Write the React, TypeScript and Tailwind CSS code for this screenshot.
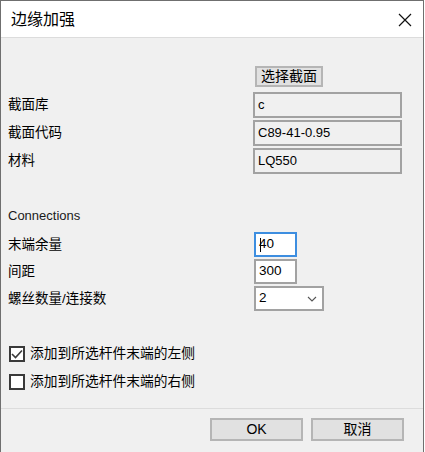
import React from "react";

const FONT = "font-['Liberation_Sans','Noto_Sans_CJK_SC',sans-serif]";

const Label = ({ children }: { children: React.ReactNode }) => (
  <div className="w-[245px] shrink-0 text-[13.5px] leading-none text-black">{children}</div>
);

const ReadField = ({ value }: { value: string }) => (
  <div className="flex h-[26px] w-[149px] items-center border-2 border-[#a2a2a2] bg-[#f0f0f0] pl-[3px] text-[13px] text-black">
    {value}
  </div>
);

const EditField = ({ value, focused }: { value: string; focused?: boolean }) => (
  <div
    className={
      focused
        ? "relative flex h-[25px] w-[43px] items-center border-2 border-[#3d8ee0] bg-white pl-[3px] text-[13.5px] text-black"
        : "relative flex h-[25px] w-[43px] items-center border-2 border-[#a2a2a2] bg-white pl-[3px] text-[13.5px] text-black"
    }
  >
    {focused && <span className="absolute left-[4px] top-[4px] h-[14px] w-px bg-black" />}
    {value}
  </div>
);

const CheckBox = ({ checked, label }: { checked?: boolean; label: string }) => (
  <div className="flex items-center">
    <div className="flex h-[16px] w-[16px] items-center justify-center border-2 border-[#3a3a3a] bg-white">
      {checked && (
        <svg width="12" height="10" viewBox="0 0 12 10">
          <path d="M1 5 L4.5 8.5 L11 1.5" fill="none" stroke="#3a3a3a" strokeWidth="1.6" />
        </svg>
      )}
    </div>
    <span className="ml-[5px] text-[13.75px] leading-none text-black">{label}</span>
  </div>
);

const Button = ({ children, className }: { children: React.ReactNode; className?: string }) => (
  <div
    className={
      "flex items-center justify-center border-2 border-[#b5b5b5] bg-[#e1e1e1] text-[14px] text-black " +
      (className ?? "")
    }
  >
    {children}
  </div>
);

export default function App() {
  return (
    <div className={"h-[452px] w-[425px] overflow-hidden bg-white " + FONT}>
      <div className="flex h-[452px] w-[424px] flex-col border-x border-t border-[#6f6f6f] bg-[#f0f0f0]">
        {/* title bar */}
        <div className="flex h-[37px] shrink-0 items-center justify-between border-b border-[#dcdcdc] bg-white pl-[10px] pr-[11px] pt-[2px]">
          <span className="text-[16px] leading-none text-black">边缘加强</span>
          <svg width="14" height="14" viewBox="0 0 14 14">
            <path d="M1 1 L13 13 M13 1 L1 13" stroke="#111" strokeWidth="1.2" fill="none" />
          </svg>
        </div>

        <div className="flex flex-col pl-[7px]">
          <div className="mt-[28px] flex">
            <div className="w-[247px] shrink-0" />
            <Button className="h-[21px] w-[68px] text-[13.5px]">选择截面</Button>
          </div>

          <div className="mt-[5px] flex flex-col gap-[2px]">
            <div className="flex items-center">
              <Label>截面库</Label>
              <ReadField value="c" />
            </div>
            <div className="flex items-center">
              <Label>截面代码</Label>
              <ReadField value="C89-41-0.95" />
            </div>
            <div className="flex items-center">
              <Label>材料</Label>
              <ReadField value="LQ550" />
            </div>
          </div>

          <div className="mt-[33px] text-[13px] leading-[18px] text-[#1a1a1a]">Connections</div>

          <div className="mt-[7px] flex flex-col gap-[2px] pl-0">
            <div className="flex items-center">
              <Label>末端余量</Label>
              <div className="ml-px">
                <EditField value="40" focused />
              </div>
            </div>
            <div className="flex items-center">
              <Label>间距</Label>
              <div className="ml-px">
                <EditField value="300" />
              </div>
            </div>
            <div className="flex items-center">
              <Label>螺丝数量/连接数</Label>
              <div className="ml-px flex h-[25px] w-[70px] items-center justify-between border-2 border-[#a2a2a2] bg-white pl-[3px] pr-[5px] text-[13.5px] text-black">
                <span>2</span>
                <svg width="10" height="6" viewBox="0 0 10 6">
                  <path d="M1 1 L5 5 L9 1" fill="none" stroke="#555" strokeWidth="1.1" />
                </svg>
              </div>
            </div>
          </div>

          <div className="mt-[35px] flex flex-col gap-[12px] pl-px">
            <CheckBox checked label="添加到所选杆件末端的左侧" />
            <CheckBox label="添加到所选杆件末端的右侧" />
          </div>
        </div>

        <div className="mt-[18px] h-px bg-[#dcdcdc]" />

        <div className="mt-[9px] flex justify-end gap-[8px] pr-[19px]">
          <Button className="h-[23px] w-[93px]">OK</Button>
          <Button className="h-[23px] w-[93px]">取消</Button>
        </div>
      </div>
    </div>
  );
}
